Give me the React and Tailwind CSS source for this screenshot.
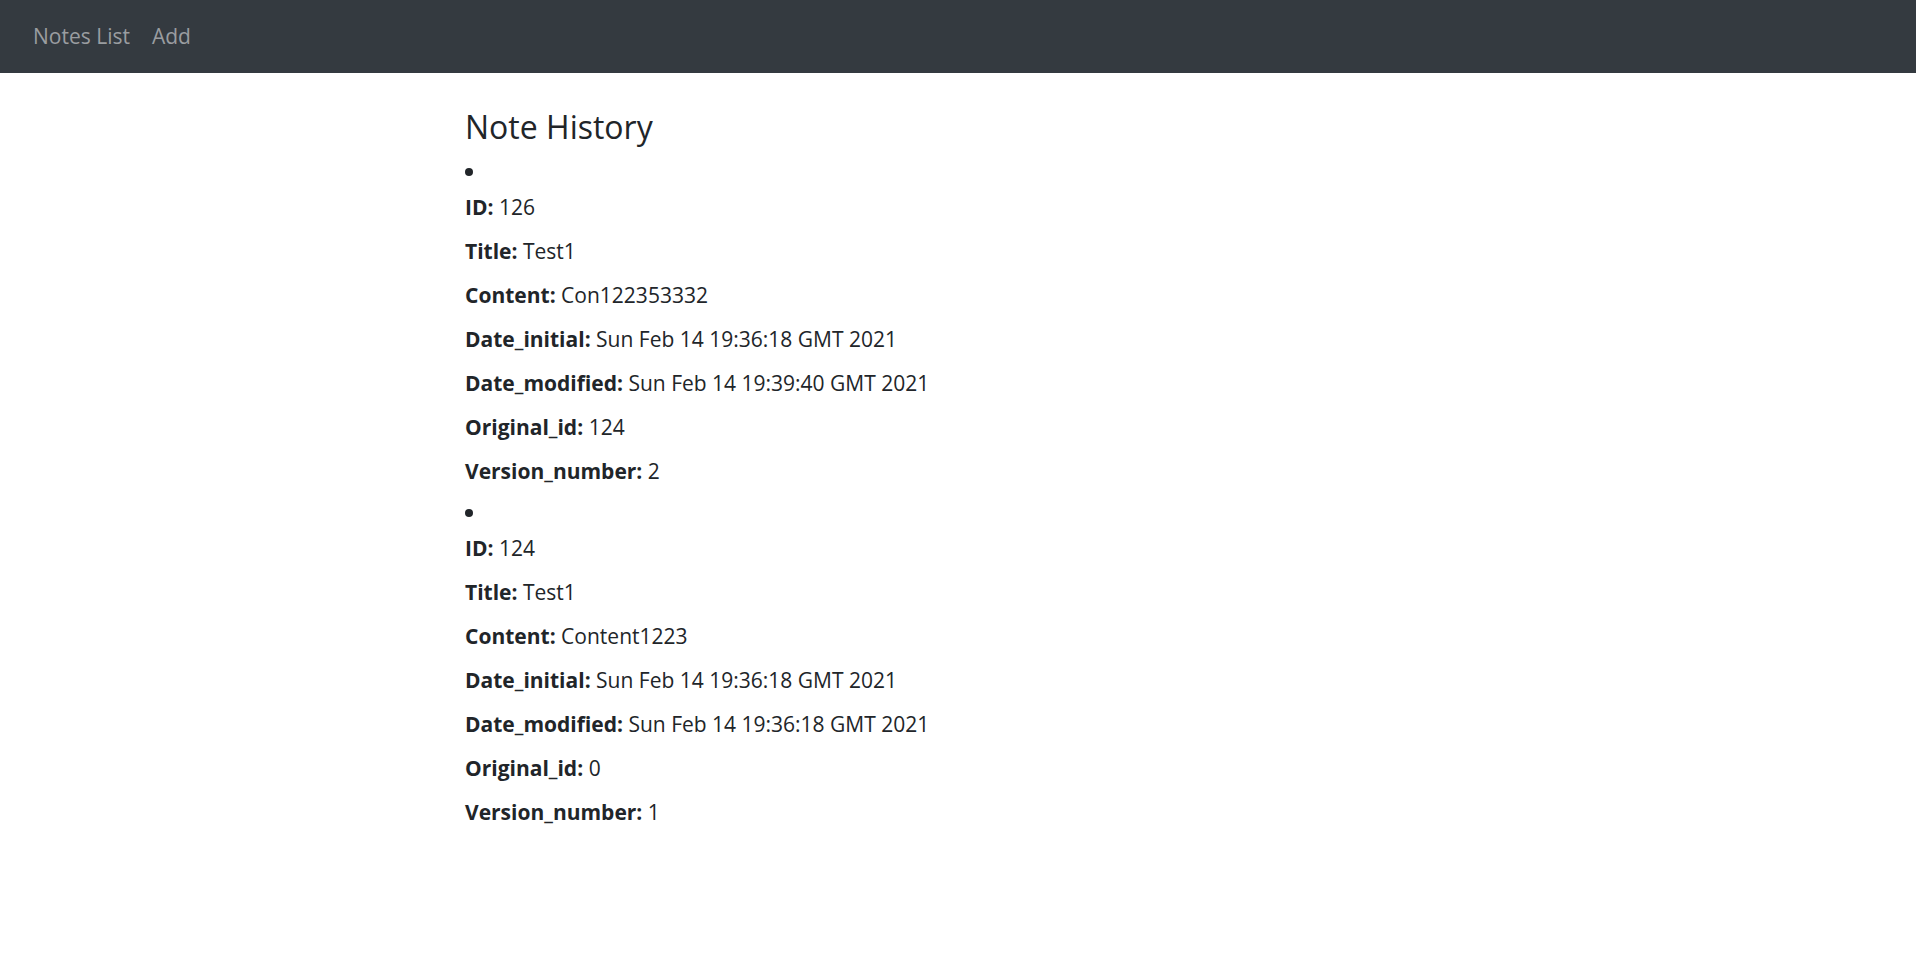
import React from "react";

const notes = [
  {
    id: 126,
    title: "Test1",
    content: "Con122353332",
    date_initial: "Sun Feb 14 19:36:18 GMT 2021",
    date_modified: "Sun Feb 14 19:39:40 GMT 2021",
    original_id: 124,
    version_number: 2,
  },
  {
    id: 124,
    title: "Test1",
    content: "Content1223",
    date_initial: "Sun Feb 14 19:36:18 GMT 2021",
    date_modified: "Sun Feb 14 19:36:18 GMT 2021",
    original_id: 0,
    version_number: 1,
  },
];

const Field = ({ label, value, first }) => (
  <p className={`${first ? "mt-[7px]" : "mt-[16px]"} h-[28px] leading-[28px] whitespace-nowrap`}>
    <strong className="font-bold">{label}:</strong> {value}
  </p>
);

const App = () => {
  return (
    <div
      className="min-h-screen bg-white text-[#212529]"
      style={{ fontFamily: '"Open Sans", "Noto Sans", sans-serif' }}
    >
      {/* Navbar */}
      <nav className="h-[73px] bg-[#343a40] flex items-center px-[33px] gap-[22px] text-[21px] text-[#9a9da0]">
        <a href="#">Notes List</a>
        <a href="#">Add</a>
      </nav>

      <div className="w-[986px] mx-auto">
        <h3 className="mt-[36px] h-[36px] leading-[36px] text-[32px] font-medium">
          Note History
        </h3>
        <ul className="mt-[13px] text-[21px]">
          {notes.map((note, i) => (
            <li key={note.id} className={i > 0 ? "mt-[14px]" : ""}>
              <div className="h-[28px] flex items-center">
                <span className="w-[8px] h-[8px] rounded-full bg-[#212529]" />
              </div>
              <Field first label="ID" value={note.id} />
              <Field label="Title" value={note.title} />
              <Field label="Content" value={note.content} />
              <Field label="Date_initial" value={note.date_initial} />
              <Field label="Date_modified" value={note.date_modified} />
              <Field label="Original_id" value={note.original_id} />
              <Field label="Version_number" value={note.version_number} />
            </li>
          ))}
        </ul>
      </div>
    </div>
  );
};

export default App;
